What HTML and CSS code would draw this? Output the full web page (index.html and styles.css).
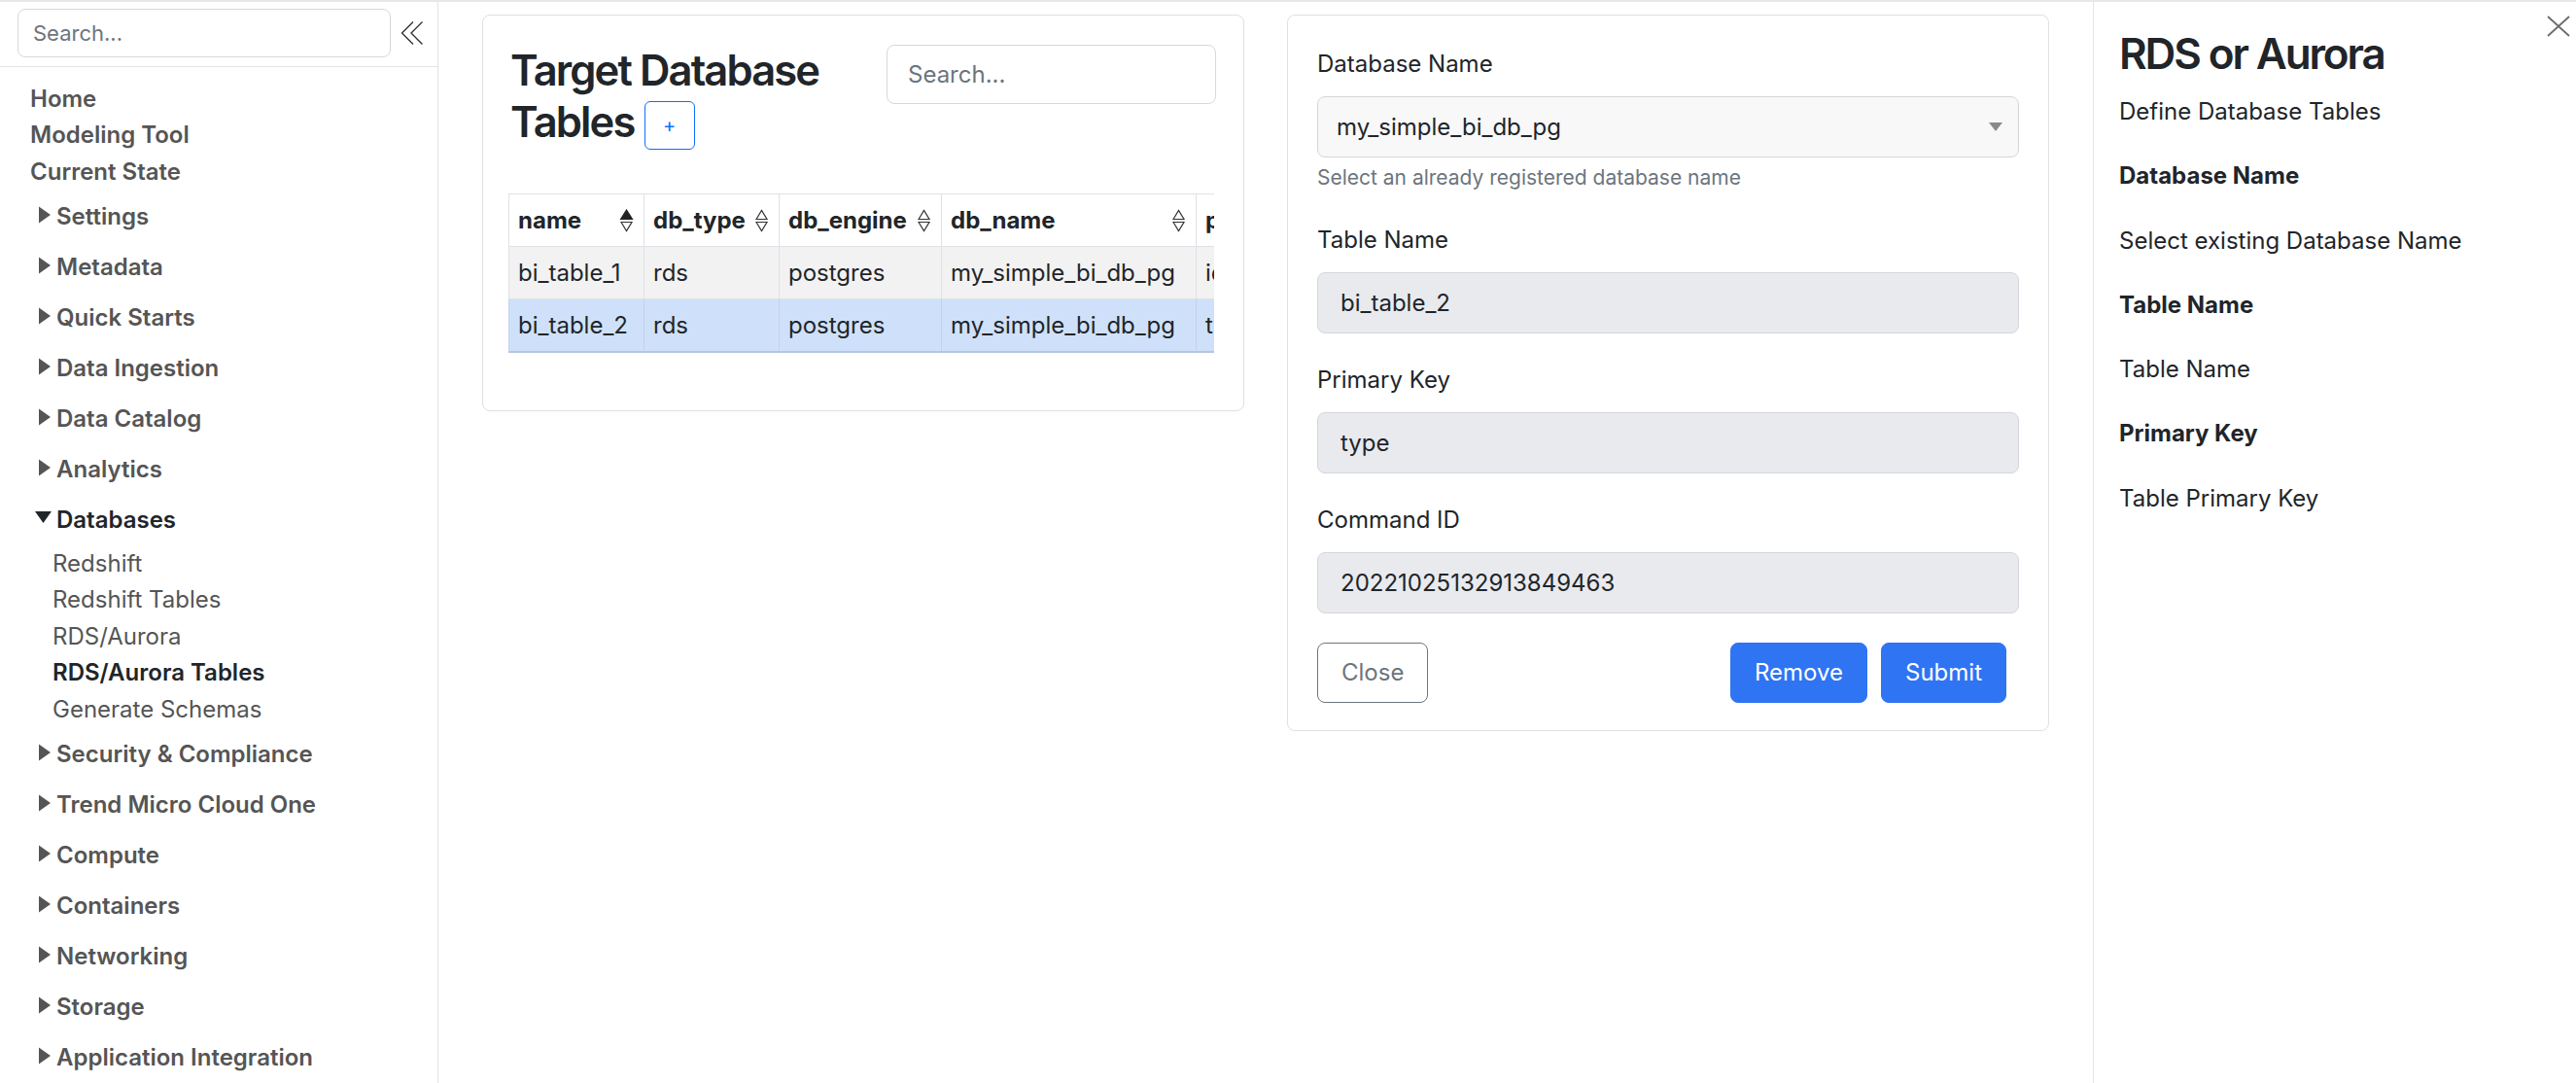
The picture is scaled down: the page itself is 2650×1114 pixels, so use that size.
FILE: index.html
```html
<!DOCTYPE html>
<html lang="en">
<head>
<meta charset="utf-8">
<title>RDS/Aurora Tables</title>
<link rel="stylesheet" href="styles.css">
</head>
<body>
<div class="app">
  <aside class="sidebar">
    <div class="side-search">
      <input class="side-input" type="text" placeholder="Search...">
      <button class="collapse-btn" type="button" aria-label="Collapse">
        <svg width="24" height="26" viewBox="0 0 24 26"><path d="M13 1.5 L1.5 13 L13 24.5 M22.5 1.5 L11 13 L22.5 24.5" fill="none" stroke="#333" stroke-width="1.4"/></svg>
      </button>
    </div>
    <nav class="nav">
      <div class="top-links">
        <a class="top-link">Home</a>
        <a class="top-link">Modeling Tool</a>
        <a class="top-link">Current State</a>
      </div>
      <div class="group-head"><svg class="caret" viewBox="0 0 18 18"><polygon points="4,0.5 16,9 4,17.5"/></svg>Settings</div>
      <div class="group-head"><svg class="caret" viewBox="0 0 18 18"><polygon points="4,0.5 16,9 4,17.5"/></svg>Metadata</div>
      <div class="group-head"><svg class="caret" viewBox="0 0 18 18"><polygon points="4,0.5 16,9 4,17.5"/></svg>Quick Starts</div>
      <div class="group-head"><svg class="caret" viewBox="0 0 18 18"><polygon points="4,0.5 16,9 4,17.5"/></svg>Data Ingestion</div>
      <div class="group-head"><svg class="caret" viewBox="0 0 18 18"><polygon points="4,0.5 16,9 4,17.5"/></svg>Data Catalog</div>
      <div class="group-head"><svg class="caret" viewBox="0 0 18 18"><polygon points="4,0.5 16,9 4,17.5"/></svg>Analytics</div>
      <div class="group-head open"><svg class="caret" viewBox="0 0 18 18"><polygon points="0,2 17,2 8.5,14"/></svg>Databases</div>
      <div class="sub">
        <a class="sub-link">Redshift</a>
        <a class="sub-link">Redshift Tables</a>
        <a class="sub-link">RDS/Aurora</a>
        <a class="sub-link current">RDS/Aurora Tables</a>
        <a class="sub-link">Generate Schemas</a>
      </div>
      <div class="group-head"><svg class="caret" viewBox="0 0 18 18"><polygon points="4,0.5 16,9 4,17.5"/></svg>Security &amp; Compliance</div>
      <div class="group-head"><svg class="caret" viewBox="0 0 18 18"><polygon points="4,0.5 16,9 4,17.5"/></svg>Trend Micro Cloud One</div>
      <div class="group-head"><svg class="caret" viewBox="0 0 18 18"><polygon points="4,0.5 16,9 4,17.5"/></svg>Compute</div>
      <div class="group-head"><svg class="caret" viewBox="0 0 18 18"><polygon points="4,0.5 16,9 4,17.5"/></svg>Containers</div>
      <div class="group-head"><svg class="caret" viewBox="0 0 18 18"><polygon points="4,0.5 16,9 4,17.5"/></svg>Networking</div>
      <div class="group-head"><svg class="caret" viewBox="0 0 18 18"><polygon points="4,0.5 16,9 4,17.5"/></svg>Storage</div>
      <div class="group-head"><svg class="caret" viewBox="0 0 18 18"><polygon points="4,0.5 16,9 4,17.5"/></svg>Application Integration</div>
    </nav>
  </aside>

  <main class="main">
    <section class="card list-card">
      <div class="list-head">
        <h2 class="title">Target Database Tables <button class="add-btn" type="button">+</button></h2>
        <input class="search" type="text" placeholder="Search...">
      </div>
      <div class="table-wrap">
        <table class="data-table">
          <colgroup>
            <col class="c-name"><col class="c-type"><col class="c-engine"><col class="c-db"><col class="c-pk"><col class="c-cmd">
          </colgroup>
          <thead>
            <tr>
              <th><div class="th-inner"><span>name</span>
                <svg class="sort" viewBox="0 0 15 24"><polygon class="on" points="1.5,10.5 7.5,1 13.5,10.5"/><polygon points="2,13.5 7.5,22.5 13,13.5"/></svg></div></th>
              <th><div class="th-inner"><span>db_type</span>
                <svg class="sort" viewBox="0 0 15 24"><polygon points="2,10.5 7.5,1.5 13,10.5"/><polygon points="2,13.5 7.5,22.5 13,13.5"/></svg></div></th>
              <th><div class="th-inner"><span>db_engine</span>
                <svg class="sort" viewBox="0 0 15 24"><polygon points="2,10.5 7.5,1.5 13,10.5"/><polygon points="2,13.5 7.5,22.5 13,13.5"/></svg></div></th>
              <th><div class="th-inner"><span>db_name</span>
                <svg class="sort" viewBox="0 0 15 24"><polygon points="2,10.5 7.5,1.5 13,10.5"/><polygon points="2,13.5 7.5,22.5 13,13.5"/></svg></div></th>
              <th><div class="th-inner"><span>primary_key</span>
                <svg class="sort" viewBox="0 0 15 24"><polygon points="2,10.5 7.5,1.5 13,10.5"/><polygon points="2,13.5 7.5,22.5 13,13.5"/></svg></div></th>
              <th><div class="th-inner"><span>command_id</span>
                <svg class="sort" viewBox="0 0 15 24"><polygon points="2,10.5 7.5,1.5 13,10.5"/><polygon points="2,13.5 7.5,22.5 13,13.5"/></svg></div></th>
            </tr>
          </thead>
          <tbody>
            <tr class="row-odd">
              <td>bi_table_1</td><td>rds</td><td>postgres</td><td>my_simple_bi_db_pg</td><td>id</td><td>20221025132801234567</td>
            </tr>
            <tr class="row-selected">
              <td>bi_table_2</td><td>rds</td><td>postgres</td><td>my_simple_bi_db_pg</td><td>type</td><td>20221025132913849463</td>
            </tr>
          </tbody>
        </table>
      </div>
    </section>

    <section class="card form-card">
      <div class="field field-help">
        <label class="label">Database Name</label>
        <div class="select-wrap">
          <select class="control select">
            <option>my_simple_bi_db_pg</option>
          </select>
          <svg class="select-arrow" width="14" height="9" viewBox="0 0 14 9"><polygon points="0,0 14,0 7,9" fill="#8a8a8a"/></svg>
        </div>
        <div class="help">Select an already registered database name</div>
      </div>
      <div class="field">
        <label class="label">Table Name</label>
        <input class="control" type="text" value="bi_table_2" disabled>
      </div>
      <div class="field">
        <label class="label">Primary Key</label>
        <input class="control" type="text" value="type" disabled>
      </div>
      <div class="field">
        <label class="label">Command ID</label>
        <input class="control" type="text" value="20221025132913849463" disabled>
      </div>
      <div class="actions">
        <button class="btn btn-outline" type="button">Close</button>
        <div class="right-actions">
          <button class="btn btn-primary" type="button">Remove</button>
          <button class="btn btn-primary" type="button">Submit</button>
        </div>
      </div>
    </section>
  </main>

  <aside class="help-panel">
    <button class="close-x" type="button" aria-label="Close">
      <svg width="24" height="22" viewBox="0 0 24 22"><path d="M1 1 L23 21 M23 1 L1 21" stroke="#6b6b6b" stroke-width="1.8" fill="none"/></svg>
    </button>
    <h2 class="help-title">RDS or Aurora</h2>
    <p>Define Database Tables</p>
    <p class="term">Database Name</p>
    <p>Select existing Database Name</p>
    <p class="term">Table Name</p>
    <p>Table Name</p>
    <p class="term">Primary Key</p>
    <p>Table Primary Key</p>
  </aside>
</div>
</body>
</html>
```

FILE: styles.css
```css
* { box-sizing: border-box; }

body {
  margin: 0;
  font-family: Inter, "Noto Sans", "Liberation Sans", sans-serif;
  color: #212529;
  background: #fff;
}

.app {
  display: flex;
  height: 1114px;
  border-top: 2px solid #e7e7ec;
  overflow: hidden;
}

/* ---------- sidebar ---------- */
.sidebar {
  width: 451px;
  flex: none;
  border-right: 1px solid #e3e3e9;
  overflow: hidden;
}

.side-search {
  display: flex;
  align-items: center;
  padding: 7px 0 9px 18px;
  border-bottom: 1px solid #e3e3e9;
}

.side-input {
  width: 384px;
  height: 50px;
  border: 1px solid #d5d8dd;
  border-radius: 8px;
  padding: 0 15px;
  font-family: inherit;
  font-size: 22px;
  color: #212529;
}
.side-input::placeholder { color: #6c757d; }

.collapse-btn {
  margin-left: 10px;
  padding: 0;
  border: 0;
  background: none;
  width: 24px;
  height: 26px;
}

.nav { padding-top: 13.5px; }

.top-links { margin-bottom: 1.5px; }

.top-link {
  display: block;
  padding-left: 31px;
  font-size: 24px;
  font-weight: 600;
  line-height: 37.5px;
  color: #555;
}

.group-head {
  padding: 7px 0 7.5px 36px;
  font-size: 24px;
  font-weight: 600;
  line-height: 37.5px;
  color: #555;
  white-space: nowrap;
}
.group-head.open { color: #212529; }

.caret {
  width: 18px;
  height: 18px;
  margin-right: 4px;
  vertical-align: 1px;
  fill: #555;
}
.group-head.open .caret { fill: #212529; }

.sub { margin-bottom: 1.5px; }

.sub-link {
  display: block;
  padding-left: 54px;
  font-size: 24px;
  line-height: 37.5px;
  color: #555;
}
.sub-link.current { font-weight: 600; color: #212529; }

/* ---------- main ---------- */
.main {
  flex: 1;
  min-width: 0;
  display: grid;
  grid-template-columns: 1fr 1fr;
  column-gap: 44px;
  align-items: start;
  padding: 13px 45px 0;
}

.card {
  border: 1px solid #e0e0e5;
  border-radius: 8px;
  background: #fff;
  min-width: 0;
}

.list-card { padding: 30px 28px 59px; }

.list-head {
  display: flex;
  justify-content: space-between;
  align-items: flex-start;
}

.title {
  margin: 0;
  flex: 1;
  font-size: 43.5px;
  line-height: 53px;
  font-weight: 600;
  letter-spacing: -0.043em;
}

.add-btn {
  width: 52px;
  height: 50px;
  margin-left: 1px;
  vertical-align: middle;
  border: 1px solid #0d6efd;
  border-radius: 6px;
  background: #fff;
  color: #0d6efd;
  font-family: inherit;
  font-size: 20px;
  letter-spacing: 0;
  padding: 0;
}

.search {
  flex: none;
  width: 339px;
  height: 61px;
  border: 1px solid #d5d8dd;
  border-radius: 8px;
  padding: 0 21px;
  font-family: inherit;
  font-size: 24px;
}
.search::placeholder { color: #6c757d; }

.table-wrap {
  margin-top: 45px;
  margin-left: -2px;
  width: 726px;
  overflow: hidden;
}

.data-table {
  border-collapse: collapse;
  table-layout: fixed;
  width: 1187px;
  font-size: 24px;
}
.c-name { width: 139px; }
.c-type { width: 139px; }
.c-engine { width: 167px; }
.c-db { width: 262px; }
.c-pk { width: 180px; }
.c-cmd { width: 300px; }

.data-table th,
.data-table td {
  height: 54px;
  padding: 0 10px 0 9px;
  border: 1px solid #dee2e6;
  text-align: left;
  white-space: nowrap;
  overflow: hidden;
}
.data-table th { font-weight: 700; }

.th-inner {
  display: flex;
  align-items: center;
  justify-content: space-between;
  gap: 2px;
}

.sort {
  width: 15px;
  height: 24px;
  flex: none;
}
.sort polygon { fill: none; stroke: #333; stroke-width: 1.2; }
.sort polygon.on { fill: #222; stroke: #222; }

.row-odd td { background: #f2f2f2; }
.row-selected td {
  background: #cfe1fa;
  border-color: #c3d1e7;
  border-bottom: 2px solid #b6c6de;
}

/* ---------- form ---------- */
.form-card { padding: 32px 30px 28px; }

.field { margin-bottom: 30px; }

.label {
  display: block;
  font-size: 24px;
  line-height: 36px;
  margin-bottom: 15px;
}

.control {
  display: block;
  width: 100%;
  height: 63px;
  border: 1px solid #d3d6db;
  border-radius: 8px;
  padding: 0 23px;
  font-family: inherit;
  font-size: 24px;
  color: #212529;
  -webkit-text-fill-color: #212529;
  background: #e9eaee;
  opacity: 1;
}

.select-wrap { position: relative; }

.select {
  appearance: none;
  -webkit-appearance: none;
  background: #f8f8f9;
  padding-left: 19px;
}

.select-arrow {
  position: absolute;
  right: 17px;
  top: 27px;
}

.help {
  margin-top: 5px;
  margin-bottom: 3px;
  font-size: 21px;
  line-height: 31.5px;
  color: #6c757d;
}

.actions {
  display: flex;
  justify-content: space-between;
  padding-right: 13px;
}

.right-actions {
  display: flex;
  gap: 14px;
}

.btn {
  height: 62px;
  padding: 0 24px;
  border-radius: 8px;
  font-family: inherit;
  font-size: 24px;
}

.btn-outline {
  background: #fff;
  border: 1px solid #6c757d;
  color: #6c757d;
}

.btn-primary {
  background: #2f74f3;
  border: 1px solid #2f74f3;
  color: #fff;
}

/* ---------- help panel ---------- */
.help-panel {
  position: relative;
  width: 497px;
  flex: none;
  border-left: 1px solid #e3e3e9;
  padding: 27px 20px 0 26px;
}

.close-x {
  position: absolute;
  top: 14px;
  right: 6px;
  padding: 0;
  border: 0;
  background: none;
  width: 24px;
  height: 22px;
}

.help-title {
  margin: 0 0 16px;
  font-size: 44px;
  line-height: 53px;
  font-weight: 600;
  letter-spacing: -0.048em;
}

.help-panel p {
  margin: 0 0 33.3px;
  font-size: 24px;
  line-height: 33px;
}

.help-panel p.term { font-weight: 700; }
```
